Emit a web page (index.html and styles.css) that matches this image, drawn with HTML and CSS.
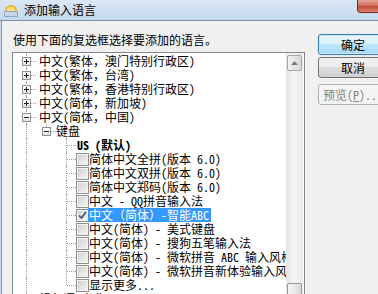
FILE: index.html
```html
<!DOCTYPE html>
<html lang="zh-CN">
<head>
    <meta charset="UTF-8">
    <meta name="viewport" content="width=device-width, initial-scale=1.0">
    <title>添加输入语言</title>
    <link rel="stylesheet" href="styles.css">
</head>
<body>
    <div class="window">
        <!-- Barra de título -->
        <div class="titlebar">
            <svg class="app-icon" width="16" height="16" viewBox="0 0 16 16">
                <path d="M2 9 A6 6 0 0 1 14 9 Z" fill="#f5b52e"/>
                <path d="M4 9 A4 4 0 0 1 12 9 Z" fill="#fde07a"/>
                <rect x="1" y="9" width="14" height="6" rx="1" fill="#8fa6bf"/>
                <rect x="2" y="10" width="12" height="4" fill="#c9d6e3"/>
            </svg>
            <span class="title">添加输入语言</span>
            <span class="close"></span>
        </div>

        <div class="client">
            <div class="main">
                <p class="hint">使用下面的复选框选择要添加的语言。</p>
                <div class="treebox">
                    <div class="tree">
                        <div class="row"><span class="cell tee"><i class="exp plus"></i></span><span class="label">中文(繁体，澳门特别行政区)</span></div>
                        <div class="row"><span class="cell tee"><i class="exp plus"></i></span><span class="label">中文(繁体，台湾)</span></div>
                        <div class="row"><span class="cell tee"><i class="exp plus"></i></span><span class="label">中文(繁体，香港特别行政区)</span></div>
                        <div class="row"><span class="cell tee"><i class="exp plus"></i></span><span class="label">中文(简体，新加坡)</span></div>
                        <div class="row"><span class="cell tee"><i class="exp"></i></span><span class="label">中文(简体，中国)</span></div>
                        <div class="row"><span class="cell vline"></span><span class="cell corner"><i class="exp"></i></span><span class="label">键盘</span></div>
                        <div class="row"><span class="cell vline"></span><span class="cell"></span><span class="cell tee"></span><span class="label bold">US (默认)</span></div>
                        <div class="row"><span class="cell vline"></span><span class="cell"></span><span class="cell tee"></span><span class="check"></span><span class="label">简体中文全拼(版本 6.0)</span></div>
                        <div class="row"><span class="cell vline"></span><span class="cell"></span><span class="cell tee"></span><span class="check"></span><span class="label">简体中文双拼(版本 6.0)</span></div>
                        <div class="row"><span class="cell vline"></span><span class="cell"></span><span class="cell tee"></span><span class="check"></span><span class="label">简体中文郑码(版本 6.0)</span></div>
                        <div class="row"><span class="cell vline"></span><span class="cell"></span><span class="cell tee"></span><span class="check"></span><span class="label">中文 - QQ拼音输入法</span></div>
                        <div class="row"><span class="cell vline"></span><span class="cell"></span><span class="cell tee"></span><span class="check checked"><svg width="9" height="9" viewBox="0 0 9 9"><path d="M1 4.5 L3.5 7 L8 1" fill="none" stroke="#3f4f75" stroke-width="1.6"/></svg></span><span class="label selected">中文（简体）-智能ABC</span></div>
                        <div class="row"><span class="cell vline"></span><span class="cell"></span><span class="cell tee"></span><span class="check"></span><span class="label">中文(简体) - 美式键盘</span></div>
                        <div class="row"><span class="cell vline"></span><span class="cell"></span><span class="cell tee"></span><span class="check"></span><span class="label">中文(简体) - 搜狗五笔输入法</span></div>
                        <div class="row"><span class="cell vline"></span><span class="cell"></span><span class="cell tee"></span><span class="check"></span><span class="label">中文(简体) - 微软拼音 ABC 输入风格</span></div>
                        <div class="row"><span class="cell vline"></span><span class="cell"></span><span class="cell tee"></span><span class="check"></span><span class="label">中文(简体) - 微软拼音新体验输入风格</span></div>
                        <div class="row"><span class="cell vline"></span><span class="cell"></span><span class="cell corner"></span><span class="check"></span><span class="label">显示更多...</span></div>
                        <div class="row"><span class="cell tee"><i class="exp plus"></i></span><span class="label">祖鲁语(南非)</span></div>
                    </div>
                    <div class="scrollbar">
                        <div class="sb-up">
                            <svg width="7" height="4" viewBox="0 0 7 4"><path d="M0 4 L3.5 0 L7 4 Z" fill="#6c7f99"/></svg>
                        </div>
                        <div class="sb-thumb"></div>
                    </div>
                </div>
            </div>

            <div class="buttons">
                <button class="btn default">确定</button>
                <button class="btn">取消</button>
                <button class="btn" disabled>预览(<u>P</u>)...</button>
            </div>
        </div>
    </div>
</body>
</html>
```

FILE: styles.css
```css
/* Janela estilo Windows 7 */
body {
    margin: 0;
    font-family: "Noto Sans Mono CJK SC", "Noto Sans CJK SC", sans-serif;
    font-size: 12px;
    color: #000;
}

.window {
    width: 378px;
    height: 294px;
    overflow: hidden;
    background: #c9d9ec;
}

.titlebar {
    height: 20px;
    display: flex;
    align-items: center;
    background: linear-gradient(#dae7f5, #c5d8ed);
    border-bottom: 1px solid #7d8fa4;
}

.app-icon {
    margin: 0 5px 0 3px;
}

.title {
    font-family: "Noto Sans CJK SC", sans-serif;
    line-height: 14px;
}

.close {
    margin-left: auto;
    align-self: flex-start;
    width: 20px;
    height: 12px;
    border-left: 1px solid #6e2c22;
    border-bottom: 1px solid #6e2c22;
    border-bottom-left-radius: 4px;
    background: linear-gradient(#e6a596, #d27462 45%, #c34a36 55%, #d8836e);
}

.client {
    display: flex;
    height: 300px;
    margin-left: 1px;
    border-left: 1px solid #8c9bae;
    background: #f0f0f0;
}

.main {
    padding: 12px 0 0 10px;
}

.hint {
    margin: 0 0 5px 1px;
    line-height: 14px;
}

/* Caixa da árvore */
.treebox {
    display: flex;
    width: 293px;
    height: 250px;
    box-sizing: border-box;
    border: 1px solid #828790;
    padding-right: 1px;
    background: #fff;
}

.tree {
    flex: 1;
    padding-top: 1px;
    overflow: hidden;
}

.row {
    display: flex;
    align-items: center;
    height: 14px;
    padding-left: 3px;
    white-space: nowrap;
}

.cell {
    position: relative;
    flex: none;
    width: 20px;
    height: 14px;
    display: flex;
    align-items: center;
}

.cell.vline::before,
.cell.tee::before,
.cell.corner::before {
    content: "";
    position: absolute;
    left: 10px;
    top: 0;
    bottom: 0;
    border-left: 1px dotted #a0a0a0;
}

.cell.corner::before {
    bottom: 7px;
}

.cell.tee::after,
.cell.corner::after {
    content: "";
    position: absolute;
    left: 11px;
    right: 0;
    top: 7px;
    border-top: 1px dotted #a0a0a0;
}

.exp {
    position: relative;
    z-index: 1;
    width: 9px;
    height: 9px;
    margin-left: 6px;
    box-sizing: border-box;
    border: 1px solid #919191;
    background: linear-gradient(#ffffff, #e3e3e3);
}

.exp::before,
.exp.plus::after {
    content: "";
    position: absolute;
    background: #1f1f1f;
}

.exp::before {
    left: 1px;
    top: 3px;
    width: 5px;
    height: 1px;
}

.exp.plus::after {
    left: 3px;
    top: 1px;
    width: 1px;
    height: 5px;
}

.label {
    margin-left: 3px;
    line-height: 14px;
}

.cell + .label {
    margin-left: 3px;
}

.cell.corner + .label {
    margin-left: 0;
}

.cell.tee + .label.bold {
    margin-left: 1px;
}

.bold {
    font-weight: bold;
}

.check {
    flex: none;
    width: 13px;
    height: 13px;
    box-sizing: border-box;
    border: 1px solid #8f8f8f;
    background: linear-gradient(135deg, #cdcdcd, #f7f7f7);
    box-shadow: inset 0 0 0 1px #f2f2f2;
    display: flex;
    align-items: center;
    justify-content: center;
}

.check + .label {
    margin-left: -1px;
    padding: 0 2px 0 1px;
}

.selected {
    background: #3399ff;
    color: #fff;
}

/* Barra de rolagem */
.scrollbar {
    width: 17px;
    padding-top: 2px;
    background: linear-gradient(to right, #e4e4e4, #f3f3f3 40%, #ececec);
}

.sb-up {
    width: 15px;
    height: 16px;
    margin-left: 1px;
    box-sizing: border-box;
    border: 1px solid #a6a6a6;
    border-radius: 2px;
    background: linear-gradient(to right, #f3f3f3, #e6e6e6 50%, #d8d8d8);
    display: flex;
    align-items: center;
    justify-content: center;
}

.sb-thumb {
    width: 15px;
    height: 30px;
    margin: 212px 0 0 1px;
    box-sizing: border-box;
    border: 1px solid #979797;
    border-radius: 2px;
    background: linear-gradient(to right, #f3f3f3, #e8e8e8 50%, #d9d9d9);
}

/* Botões */
.buttons {
    display: flex;
    flex-direction: column;
    margin-left: 13px;
    padding-top: 13px;
}

.btn {
    width: 70px;
    height: 21px;
    padding: 0;
    margin-bottom: 2px;
    font-family: "Noto Sans Mono CJK SC", "Noto Sans CJK SC", sans-serif;
    font-size: 12px;
    color: #000;
    border: 1px solid #707070;
    border-radius: 3px;
    background: linear-gradient(#f2f2f2, #ebebeb 50%, #dddddd 50%, #cfcfcf);
}

.btn.default {
    border-color: #3c7fb1;
    background: linear-gradient(#eaf6fd, #d9f0fc 50%, #bee6fd 50%, #a7d9f5);
    box-shadow: 0 0 1px #68b6e6, inset 0 0 0 1px #c6e6f8;
}

.btn:disabled {
    margin-top: 4px;
    color: #838383;
    border-color: #adb2b5;
    background: #f4f4f4;
}
```
